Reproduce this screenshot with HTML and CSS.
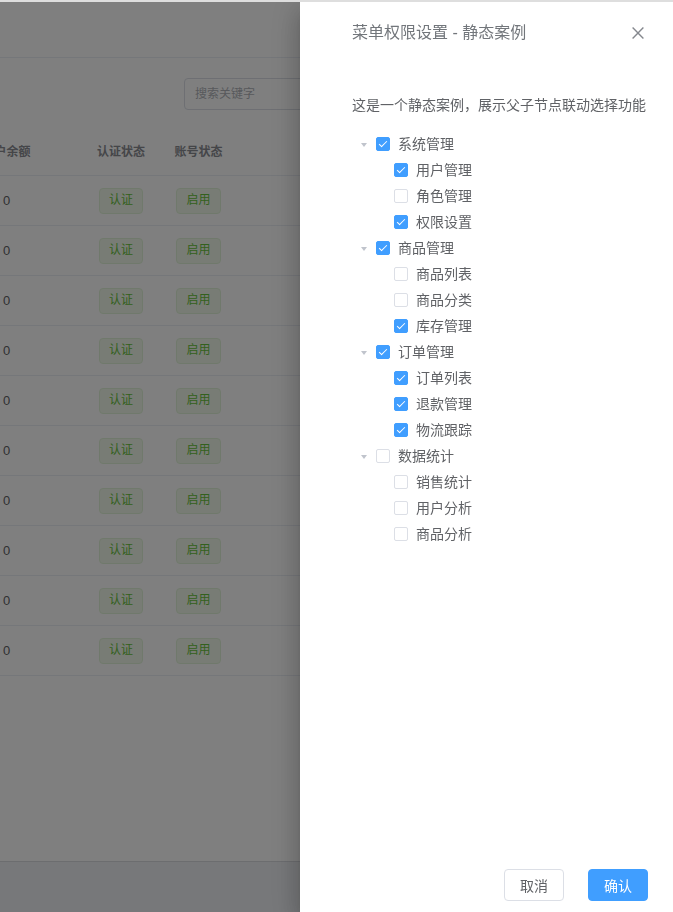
FILE: index.html
```html
<!DOCTYPE html>
<html lang="zh-CN">
<head>
  <meta charset="UTF-8">
  <meta name="viewport" content="width=device-width, initial-scale=1.0">
  <title>菜单权限设置</title>
  <link rel="stylesheet" href="styles.css">
</head>
<body>
  <div class="topline"></div>

  <div class="page">
    <div class="page-header"></div>

    <div class="toolbar">
      <input type="text" class="search" placeholder="搜索关键字">
    </div>

    <table class="grid">
      <colgroup>
        <col class="col-balance">
        <col class="col-auth">
        <col class="col-state">
        <col class="col-ops">
      </colgroup>
      <thead>
        <tr><th>账户余额</th><th>认证状态</th><th>账号状态</th><th>操作</th></tr>
      </thead>
      <tbody>
        <tr><td>0</td><td><span class="tag">认证</span></td><td><span class="tag">启用</span></td><td></td></tr>
        <tr><td>0</td><td><span class="tag">认证</span></td><td><span class="tag">启用</span></td><td></td></tr>
        <tr><td>0</td><td><span class="tag">认证</span></td><td><span class="tag">启用</span></td><td></td></tr>
        <tr><td>0</td><td><span class="tag">认证</span></td><td><span class="tag">启用</span></td><td></td></tr>
        <tr><td>0</td><td><span class="tag">认证</span></td><td><span class="tag">启用</span></td><td></td></tr>
        <tr><td>0</td><td><span class="tag">认证</span></td><td><span class="tag">启用</span></td><td></td></tr>
        <tr><td>0</td><td><span class="tag">认证</span></td><td><span class="tag">启用</span></td><td></td></tr>
        <tr><td>0</td><td><span class="tag">认证</span></td><td><span class="tag">启用</span></td><td></td></tr>
        <tr><td>0</td><td><span class="tag">认证</span></td><td><span class="tag">启用</span></td><td></td></tr>
        <tr><td>0</td><td><span class="tag">认证</span></td><td><span class="tag">启用</span></td><td></td></tr>
      </tbody>
    </table>

    <div class="spacer"></div>
    <div class="page-footer"></div>
  </div>

  <div class="overlay"></div>

  <aside class="drawer">
    <header class="drawer-header">
      <span class="drawer-title">菜单权限设置 - 静态案例</span>
      <button class="drawer-close" aria-label="关闭">
        <svg width="12" height="12" viewBox="0 0 12 12">
          <path d="M0.6 0.6 L11.4 11.4 M11.4 0.6 L0.6 11.4" stroke="#85888e" stroke-width="1.4" fill="none"/>
        </svg>
      </button>
    </header>

    <div class="drawer-body">
      <p class="desc">这是一个静态案例，展示父子节点联动选择功能</p>

      <div class="tree" id="tree">
        <div class="node">
          <div class="node-row"><span class="caret"></span><span class="check is-checked"></span><span class="label">系统管理</span></div>
          <div class="node-row child"><span class="caret leaf"></span><span class="check is-checked"></span><span class="label">用户管理</span></div>
          <div class="node-row child"><span class="caret leaf"></span><span class="check"></span><span class="label">角色管理</span></div>
          <div class="node-row child"><span class="caret leaf"></span><span class="check is-checked"></span><span class="label">权限设置</span></div>
        </div>
        <div class="node">
          <div class="node-row"><span class="caret"></span><span class="check is-checked"></span><span class="label">商品管理</span></div>
          <div class="node-row child"><span class="caret leaf"></span><span class="check"></span><span class="label">商品列表</span></div>
          <div class="node-row child"><span class="caret leaf"></span><span class="check"></span><span class="label">商品分类</span></div>
          <div class="node-row child"><span class="caret leaf"></span><span class="check is-checked"></span><span class="label">库存管理</span></div>
        </div>
        <div class="node">
          <div class="node-row"><span class="caret"></span><span class="check is-checked"></span><span class="label">订单管理</span></div>
          <div class="node-row child"><span class="caret leaf"></span><span class="check is-checked"></span><span class="label">订单列表</span></div>
          <div class="node-row child"><span class="caret leaf"></span><span class="check is-checked"></span><span class="label">退款管理</span></div>
          <div class="node-row child"><span class="caret leaf"></span><span class="check is-checked"></span><span class="label">物流跟踪</span></div>
        </div>
        <div class="node">
          <div class="node-row"><span class="caret"></span><span class="check"></span><span class="label">数据统计</span></div>
          <div class="node-row child"><span class="caret leaf"></span><span class="check"></span><span class="label">销售统计</span></div>
          <div class="node-row child"><span class="caret leaf"></span><span class="check"></span><span class="label">用户分析</span></div>
          <div class="node-row child"><span class="caret leaf"></span><span class="check"></span><span class="label">商品分析</span></div>
        </div>
      </div>
    </div>

    <footer class="drawer-footer">
      <button class="btn">取消</button>
      <button class="btn btn-primary">确认</button>
    </footer>
  </aside>

  <script>
    // Toggle a checkbox; parent rows tick all children
    document.getElementById('tree').addEventListener('click', (e) => {
      const row = e.target.closest('.node-row');
      if (!row) return;
      const box = row.querySelector('.check');
      const on = !box.classList.contains('is-checked');
      if (!row.classList.contains('child')) {
        row.parentNode.querySelectorAll('.check').forEach(c => c.classList.toggle('is-checked', on));
      } else {
        box.classList.toggle('is-checked', on);
      }
    });
  </script>
</body>
</html>
```

FILE: styles.css
```css
html, body {
  margin: 0;
  height: 100%;
}

body {
  font-family: "Liberation Sans", "Noto Sans CJK SC", sans-serif;
  color: #606266;
  overflow: hidden;
  background: #fff;
}

.topline {
  position: fixed;
  top: 0;
  left: 0;
  right: 0;
  height: 2px;
  background: #dedede;
  z-index: 3000;
}

/* page under the mask */
.page {
  display: flex;
  flex-direction: column;
  height: 100%;
  width: 900px;
  margin-left: -69px;
  box-sizing: border-box;
  padding-top: 2px;
}

.page-header {
  height: 55px;
  border-bottom: 1px solid #ebeef5;
}

.toolbar {
  height: 68px;
  padding: 20px 0 0 253px;
  box-sizing: border-box;
}

.search {
  width: 220px;
  height: 32px;
  box-sizing: border-box;
  border: 1px solid #dcdfe6;
  border-radius: 4px;
  padding: 0 10px;
  font-family: inherit;
  font-size: 12px;
  color: #606266;
  outline: none;
}

.search::placeholder {
  color: #b0b3b9;
}

.grid {
  table-layout: fixed;
  width: 900px;
  border-collapse: collapse;
}

.col-balance { width: 151px; }
.col-auth { width: 78px; }
.col-state { width: 77px; }

.grid th,
.grid td {
  height: 49px;
  padding: 0;
  text-align: center;
  border-bottom: 1px solid #ebeef5;
  font-size: 13px;
}

.grid th {
  font-size: 12px;
  font-weight: bold;
  color: #8a8c92;
}

.grid td {
  color: #606266;
}

.grid th:last-child {
  text-align: left;
  padding-left: 120px;
}

.tag {
  display: inline-block;
  height: 24px;
  line-height: 22px;
  padding: 0 9px;
  font-size: 12px;
  color: #67c23a;
  background: #f0f9eb;
  border: 1px solid #e1f3d8;
  border-radius: 4px;
  vertical-align: middle;
}

.spacer {
  flex: 1;
}

.page-footer {
  height: 50px;
  border-top: 1px solid #d8dadf;
  background: #eef0f4;
}

.overlay {
  position: fixed;
  inset: 0;
  background: rgba(0, 0, 0, 0.5);
  z-index: 2000;
}

/* drawer */
.drawer {
  position: fixed;
  top: 0;
  right: 0;
  width: 373px;
  height: 100%;
  background: #fff;
  z-index: 2001;
  display: flex;
  flex-direction: column;
  box-shadow: 0 8px 10px -5px rgba(0,0,0,.2), 0 16px 24px 2px rgba(0,0,0,.14), 0 6px 30px 5px rgba(0,0,0,.12);
}

.drawer-header {
  display: flex;
  align-items: center;
  justify-content: space-between;
  padding: 21px 27px 0 52px;
}

.drawer-title {
  font-size: 16px;
  line-height: 24px;
  color: #72767b;
}

.drawer-close {
  border: 0;
  background: none;
  padding: 0;
  width: 16px;
  height: 16px;
  display: flex;
  align-items: center;
  justify-content: center;
  cursor: pointer;
}

.drawer-body {
  flex: 1;
  padding: 0 20px 0 52px;
}

.desc {
  margin: 50px 0 16px;
  font-size: 14px;
  line-height: 20px;
  color: #606266;
}

.node-row {
  display: flex;
  align-items: center;
  height: 26px;
  cursor: pointer;
}

.node-row.child {
  padding-left: 18px;
}

.caret {
  width: 24px;
  height: 26px;
  display: flex;
  align-items: center;
  justify-content: center;
}

.caret::before {
  content: "";
  border-left: 3px solid transparent;
  border-right: 3px solid transparent;
  border-top: 4px solid #c0c4cc;
  margin-top: 1px;
}

.caret.leaf::before {
  display: none;
}

.check {
  position: relative;
  width: 14px;
  height: 14px;
  box-sizing: border-box;
  border: 1px solid #dcdfe6;
  border-radius: 2px;
  margin-right: 8px;
  background: #fff;
}

.check.is-checked {
  background: #409eff;
  border-color: #409eff;
}

.check.is-checked::after {
  content: "";
  position: absolute;
  left: 4px;
  top: 1px;
  width: 3px;
  height: 7px;
  border: 1px solid #fff;
  border-left: 0;
  border-top: 0;
  transform: rotate(45deg);
}

.label {
  font-size: 14px;
  line-height: 20px;
  color: #606266;
}

.drawer-footer {
  display: flex;
  justify-content: flex-end;
  gap: 24px;
  padding: 0 25px 11px;
}

.btn {
  height: 32px;
  width: 60px;
  padding: 0;
  font-family: inherit;
  font-size: 14px;
  color: #606266;
  background: #fff;
  border: 1px solid #dcdfe6;
  border-radius: 4px;
  cursor: pointer;
}

.btn-primary {
  color: #fff;
  background: #409eff;
  border-color: #409eff;
}
```
